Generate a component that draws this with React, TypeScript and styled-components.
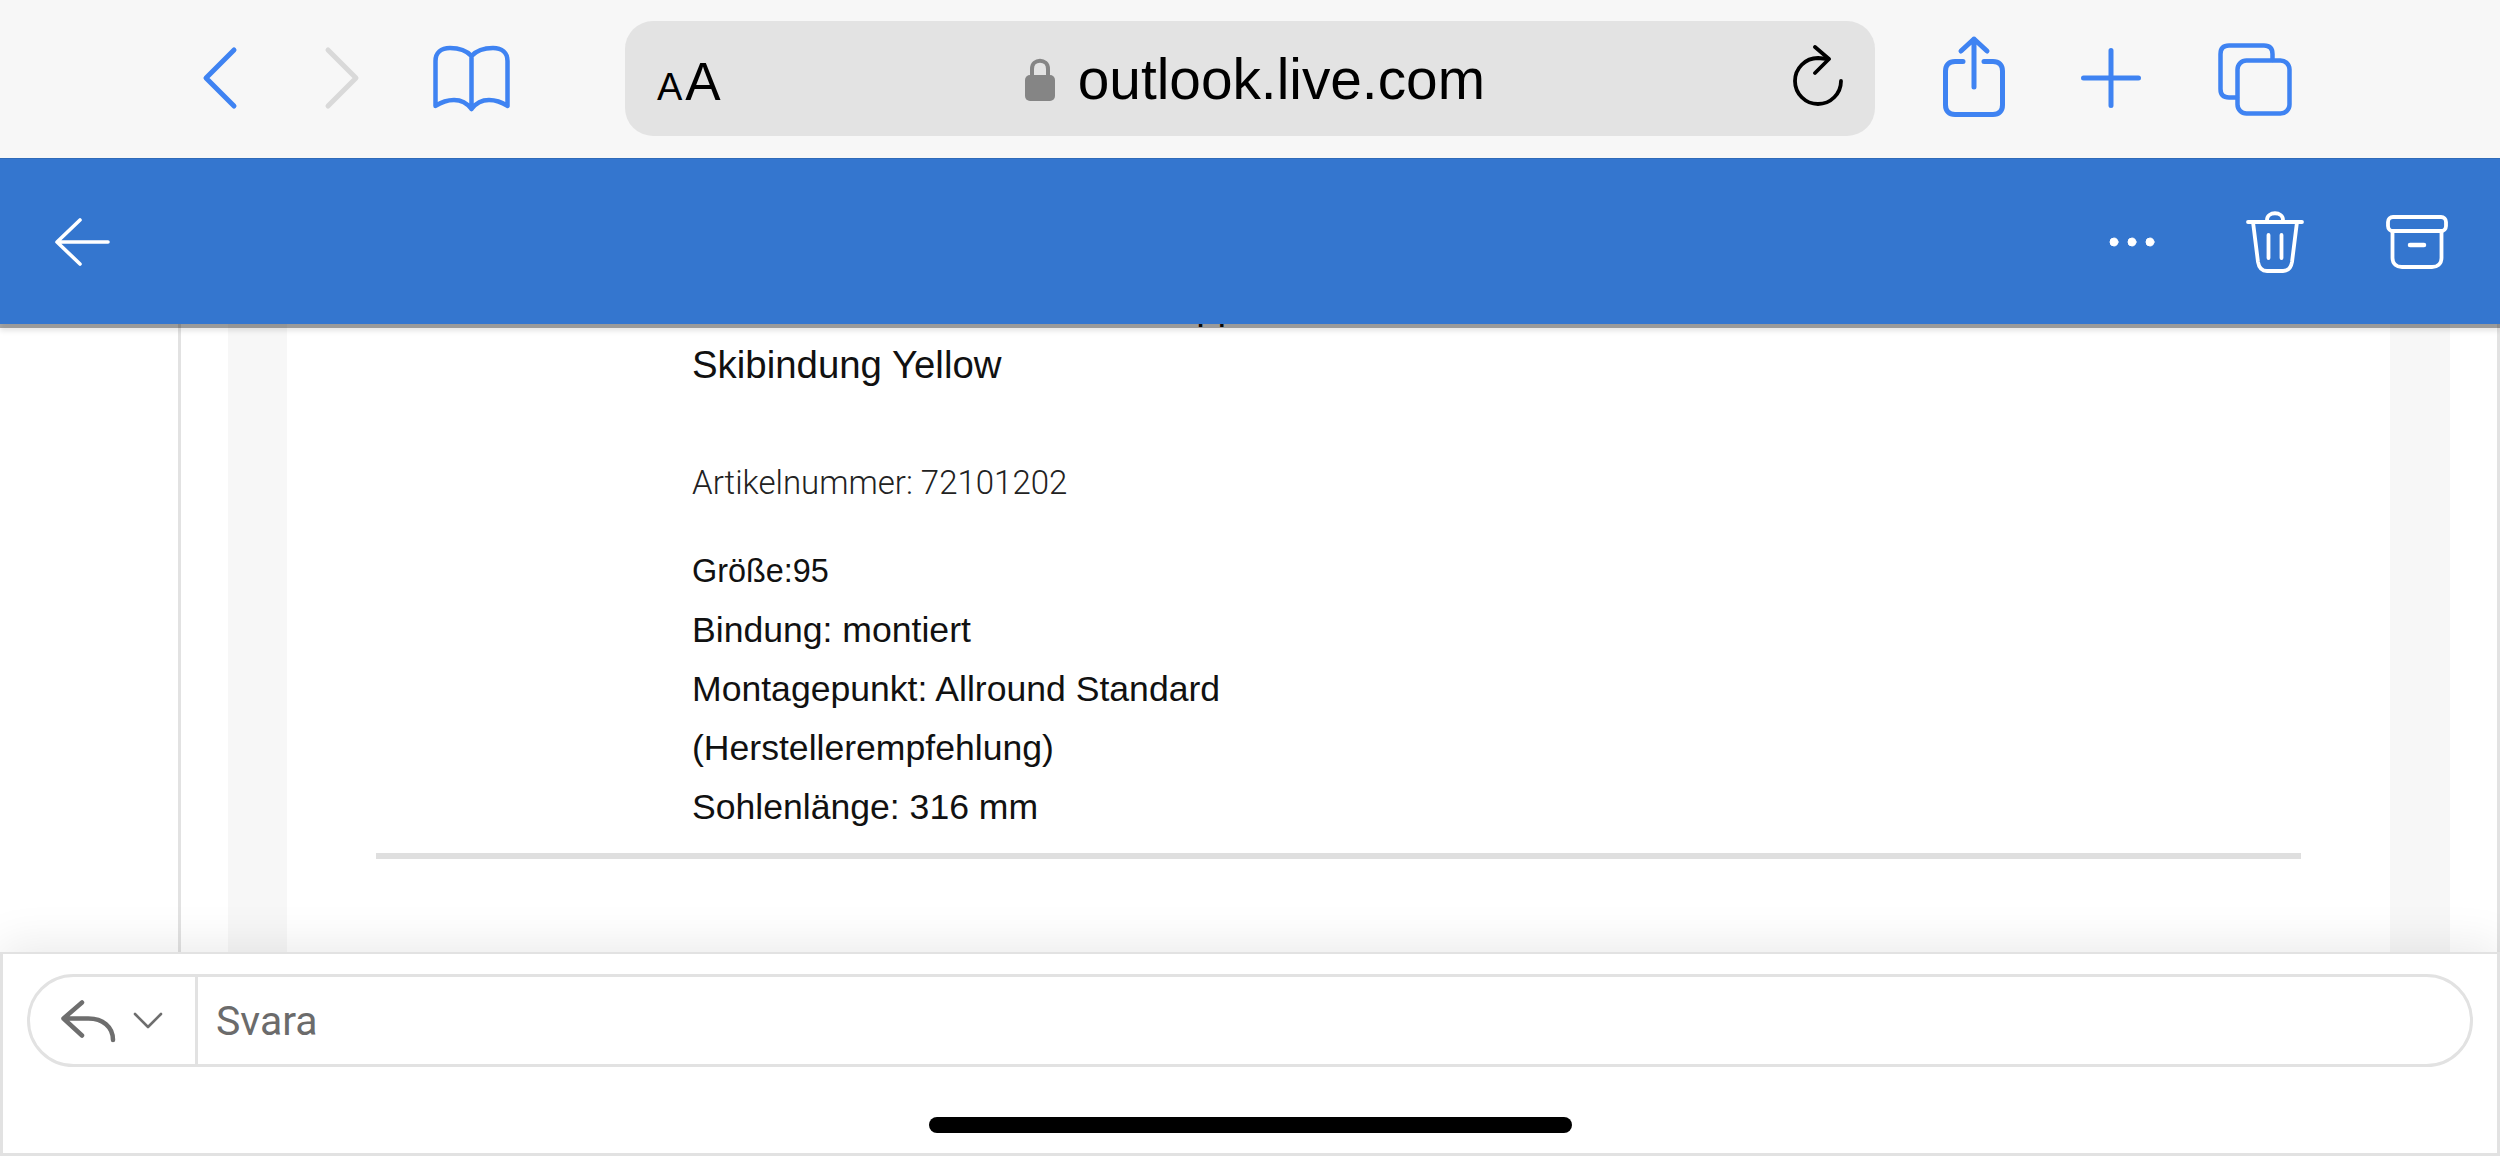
import React from "react";
import styled, { createGlobalStyle } from "styled-components";

const Global = createGlobalStyle`
  html, body { margin: 0; padding: 0; background: #fff; }
  body { font-family: "Liberation Sans", Arial, sans-serif; }
  #root { width: 2500px; height: 1156px; overflow: hidden; }
`;

const Page = styled.div`
  width: 2500px;
  height: 1156px;
  display: flex;
  flex-direction: column;
  overflow: hidden;
`;

const SafariBar = styled.div`
  height: 158px;
  flex: none;
  background: #f7f7f7;
  display: flex;
  align-items: flex-start;
`;

const Tool = styled.svg<{ $w: number; $h: number; $ml: number; $mt: number }>`
  flex: none;
  display: block;
  width: ${(p) => p.$w}px;
  height: ${(p) => p.$h}px;
  margin-left: ${(p) => p.$ml}px;
  margin-top: ${(p) => p.$mt}px;
  fill: none;
  stroke-linecap: round;
  stroke-linejoin: round;
`;

const UrlPill = styled.div`
  width: 1250px;
  height: 115px;
  margin: 21px 0 0 112px;
  flex: none;
  background: #e3e3e3;
  border-radius: 28px;
  display: flex;
  align-items: flex-start;
`;

const AaSmall = styled.span`
  font-size: 38px;
  line-height: 44px;
  margin: 44px 0 0 32px;
  color: #000;
`;

const AaBig = styled.span`
  font-size: 53px;
  line-height: 60px;
  margin: 31px 0 0 3px;
  color: #000;
`;

const Address = styled.span`
  font-size: 56.8px;
  line-height: 64px;
  color: #000;
  margin: 27px 0 0 22px;
`;

const BlueBar = styled.header`
  height: 166px;
  flex: none;
  background: #3476cf;
  border-top: 1px solid #2f6bb9;
  box-sizing: border-box;
  position: relative;
  z-index: 2;
  box-shadow: 0 4px 0 rgba(0, 0, 0, 0.33), 0 7px 5px rgba(0, 0, 0, 0.1);
  display: flex;
  align-items: center;
  padding: 0 51px 0 54px;
`;

const Spacer = styled.div`
  flex: 1;
`;

const HeadIcon = styled.svg<{ $w: number; $h: number; $ml?: number }>`
  flex: none;
  display: block;
  width: ${(p) => p.$w}px;
  height: ${(p) => p.$h}px;
  margin-left: ${(p) => p.$ml ?? 0}px;
  fill: none;
  stroke: #fff;
  stroke-linecap: round;
  stroke-linejoin: round;
`;

const Body = styled.main`
  flex: 1;
  min-height: 0;
  display: flex;
  padding: 0 2px 0 178px;
  border-right: 3px solid #e2e2e2;
  background: #fff;
  overflow: hidden;
`;

const MailFrame = styled.div`
  flex: 1;
  display: flex;
  border-left: 3px solid #e2e2e2;
  padding: 0 45px 0 47px;
`;

const Band = styled.div`
  flex: 1;
  display: flex;
  background: #f7f7f7;
  padding: 0 60px 0 59px;
`;

const Card = styled.article`
  flex: 1;
  background: #fff;
  padding: 0 89px;
  margin-top: -48px;
  height: 900px;
`;

const Details = styled.div`
  padding-left: 316px;
`;

const ProductName = styled.div`
  font-size: 38.4px;
  line-height: 59px;
  color: #111;
  white-space: nowrap;
`;

const ClippedName = styled(ProductName)`
  text-indent: 5px;
`;

const ArticleNo = styled.div`
  font-family: Roboto, "Liberation Sans", sans-serif;
  font-weight: 300;
  font-size: 33px;
  line-height: 40px;
  color: #222;
  margin-top: 69px;
`;

const Spec = styled.div<{ $small?: boolean }>`
  font-size: ${(p) => (p.$small ? 32.4 : 35.6)}px;
  line-height: 59px;
  color: #111;
  white-space: nowrap;
`;

const SpecList = styled.div`
  margin-top: 39px;
`;

const Rule = styled.hr`
  border: 0;
  height: 6px;
  background: #dfdfdf;
  margin: 16px 0 0;
`;

const Composer = styled.footer`
  height: 204px;
  flex: none;
  box-sizing: border-box;
  background: #fff;
  border: 3px solid #e2e2e2;
  border-top-width: 2px;
  position: relative;
  z-index: 2;
  box-shadow: 0 -6px 44px rgba(0, 0, 0, 0.09);
  padding: 20px 24px 0;
  display: flex;
  flex-direction: column;
`;

const ReplyPill = styled.div`
  height: 93px;
  box-sizing: border-box;
  border: 3px solid #e2e2e2;
  border-radius: 47px;
  display: flex;
  align-items: center;
`;

const ReplyButtons = styled.div`
  width: 168px;
  height: 100%;
  flex: none;
  box-sizing: border-box;
  border-right: 3px solid #e2e2e2;
  display: flex;
  align-items: center;
  padding-left: 31px;
  gap: 16px;
`;

const Placeholder = styled.span`
  font-family: Roboto, sans-serif;
  font-size: 41px;
  color: #6b6b6b;
  margin-left: 18px;
`;

const HomeIndicator = styled.div`
  width: 643px;
  height: 16px;
  border-radius: 8px;
  background: #000;
  margin: 50px auto 0;
`;

const blue = "#3f83f2";

export default function App() {
  return (
    <Page>
      <Global />
      <SafariBar>
        <Tool $w={40} $h={66} $ml={200} $mt={45} viewBox="0 0 40 66" stroke={blue} strokeWidth={5}>
          <path d="M34 5 L6 33 L34 61" />
        </Tool>
        <Tool $w={40} $h={66} $ml={82} $mt={45} viewBox="0 0 40 66" stroke="#d9d9d9" strokeWidth={5}>
          <path d="M6 5 L34 33 L6 61" />
        </Tool>
        <Tool $w={82} $h={68} $ml={69} $mt={44} viewBox="0 0 82 68" stroke={blue} strokeWidth={4.5}>
          <path d="M40.5 12 C35 6 27 4 19 4 C10 4 4.5 9 4.5 17 V62 C12 57 18 56 23 56 C30 56 36 59 40.5 65 C45 59 51 56 58 56 C63 56 69 57 76.5 62 V17 C76.5 9 71 4 62 4 C54 4 46 6 40.5 12 V65" />
        </Tool>
        <UrlPill>
          <AaSmall>A</AaSmall>
          <AaBig>A</AaBig>
          <Tool $w={32} $h={44} $ml={303} $mt={36} viewBox="0 0 32 44">
            <path d="M8 20 V12 C8 1 24 1 24 12 V20" stroke="#858585" strokeWidth={4} />
            <rect x="1" y="18" width="30" height="26" rx="5" fill="#858585" />
          </Tool>
          <Address>outlook.live.com</Address>
          <Tool $w={54} $h={64} $ml={306} $mt={24} viewBox="0 0 54 64" stroke="#000" strokeWidth={3.8}>
            <path d="M50 36 A23 23 0 1 1 27 13 L37 14" />
            <path d="M24 2 L38 14 L24 28" />
          </Tool>
        </UrlPill>
        <Tool $w={66} $h={84} $ml={66} $mt={35} viewBox="0 0 66 84" stroke={blue} strokeWidth={5}>
          <path d="M22 26.5 H14 C8 26.5 4.5 30 4.5 36 V70 C4.5 76 8 79.5 14 79.5 H52 C58 79.5 61.5 76 61.5 70 V36 C61.5 30 58 26.5 52 26.5 H43" />
          <path d="M33 52 V4 M20 16 L33 4 L46 16" />
        </Tool>
        <Tool $w={62} $h={62} $ml={73} $mt={47} viewBox="0 0 62 62" stroke={blue} strokeWidth={5}>
          <path d="M31 3.5 V58.5 M3.5 31 H58.5" />
        </Tool>
        <Tool $w={78} $h={78} $ml={74} $mt={41} viewBox="0 0 78 78" stroke={blue} strokeWidth={4.5}>
          <path d="M21 56.5 H13 C7.5 56.5 4.5 53.5 4.5 48 V13 C4.5 7.5 7.5 4.5 13 4.5 H48 C53.5 4.5 56.5 7.5 56.5 13 V19" />
          <rect x="21.5" y="19.5" width="52" height="53" rx="9" />
        </Tool>
      </SafariBar>
      <BlueBar>
        <HeadIcon $w={56} $h={48} viewBox="0 0 56 48" strokeWidth={3.6}>
          <path d="M54 24 H4 M26 2 L3 24 L26 46" />
        </HeadIcon>
        <Spacer />
        <HeadIcon $w={48} $h={10} viewBox="0 0 48 10" stroke="none">
          <circle cx="6" cy="5" r="4" fill="#fff" />
          <circle cx="24" cy="5" r="4" fill="#fff" />
          <circle cx="42" cy="5" r="4" fill="#fff" />
        </HeadIcon>
        <HeadIcon $w={60} $h={64} $ml={89} viewBox="0 0 60 64" strokeWidth={3.8}>
          <path d="M3 12 H57 M22 12 V10 C22 1 38 1 38 10 V12 M8 12 L13 52 C14 58 17 61 22 61 H38 C43 61 46 58 47 52 L52 12 M23.5 25 V48 M36.5 25 V48" />
        </HeadIcon>
        <HeadIcon $w={64} $h={56} $ml={80} viewBox="0 0 64 56" strokeWidth={3.8}>
          <rect x="3" y="3" width="58" height="14" rx="5" />
          <path d="M7.5 17 V44 C7.5 50 12 53 17 53 H47 C52 53 56.5 50 56.5 44 V17" />
          <path d="M25 31 H39" strokeWidth={4.5} />
        </HeadIcon>
      </BlueBar>
      <Body>
        <MailFrame>
          <Band>
            <Card>
              <Details>
                <ClippedName>Kinderski Rocker Mini mit Klappe</ClippedName>
                <ProductName>Skibindung Yellow</ProductName>
                <ArticleNo>Artikelnummer: 72101202</ArticleNo>
                <SpecList>
                  <Spec $small>Größe:95</Spec>
                  <Spec>Bindung: montiert</Spec>
                  <Spec>Montagepunkt: Allround Standard</Spec>
                  <Spec>(Herstellerempfehlung)</Spec>
                  <Spec>Sohlenlänge: 316 mm</Spec>
                </SpecList>
              </Details>
              <Rule />
            </Card>
          </Band>
        </MailFrame>
      </Body>
      <Composer>
        <ReplyPill>
          <ReplyButtons>
            <svg width="56" height="44" viewBox="0 0 56 44" fill="none" stroke="#6e6e6e" strokeWidth="4.5" strokeLinecap="round" strokeLinejoin="round">
              <path d="M21 3.5 L2.5 19.5 L21 36.5 M2.5 19.5 H26 C42 19 52 28 52 41" />
            </svg>
            <svg width="30" height="18" viewBox="0 0 30 18" fill="none" stroke="#6e6e6e" strokeWidth="2.6" strokeLinecap="round" strokeLinejoin="round">
              <path d="M2 2 L15 15 L28 2" />
            </svg>
          </ReplyButtons>
          <Placeholder>Svara</Placeholder>
        </ReplyPill>
        <HomeIndicator />
      </Composer>
    </Page>
  );
}
